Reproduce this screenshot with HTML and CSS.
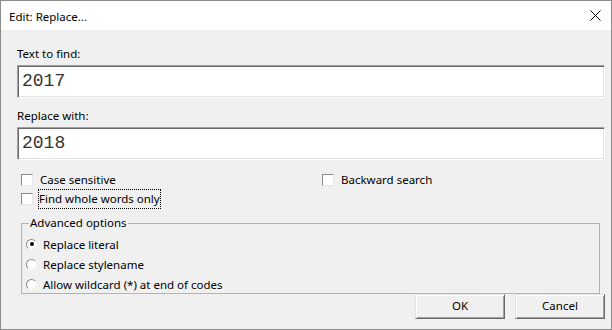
FILE: index.html
```html
<html>
<head>
<meta http-equiv="content-type" content="text/html; charset=utf-8">
<link rel="stylesheet" href="styles.css">
<title>Edit: Replace...</title>
</head>
<body>
<div class=win>
<div class=titlebar>
<span class=title>Edit: Replace...</span>
<svg class=close width=11 height=11 viewBox="0 0 11 11"><path d="M0.5 0.5L10.5 10.5M10.5 0.5L0.5 10.5" stroke="#000" stroke-width="1"/></svg>
</div>
<div class=main>
<div class=label>Text to find:</div>
<div class=edit>2017</div>
<div class=label>Replace with:</div>
<div class=edit>2018</div>
<div class=checks>
<div class=check><span class=box></span><span class=ctext>Case sensitive</span></div>
<div class=check><span class=box></span><span class=ctext>Backward search</span></div>
<div class=check><span class=box></span><span class="ctext focus">Find whole words only</span></div>
</div>
<fieldset class=group>
<legend>Advanced options</legend>
<div class=radio><span class="dot on"></span>Replace literal</div>
<div class=radio><span class=dot></span>Replace stylename</div>
<div class=radio><span class=dot></span>Allow wildcard (*) at end of codes</div>
</fieldset>
<div class=buttons>
<div class=btn>OK</div>
<div class=btn>Cancel</div>
</div>
</div>
</div>
</body>
</html>
```
FILE: styles.css
```css
html,body{margin:0;padding:0}
body{font-family:"Noto Sans","Liberation Sans",sans-serif;font-size:11.5px;color:#000;background:#f0f0f0}
.win{box-sizing:border-box;width:612px;height:330px;border:1px solid #8c8c8c;background:#f0f0f0}
.titlebar{height:29px;background:#fff;display:flex;align-items:center;justify-content:space-between;padding:0 10px 0 8px}
.title{line-height:16px;position:relative;top:1px}
.close{display:block}
.main{padding:16px 6px 0 16px}
.label{line-height:16px;height:16px;margin:0 0 3px 0}
.edit{box-sizing:border-box;height:33px;background:#fff;border:1px solid;border-color:#a0a0a0 #fff #fff #a0a0a0;
box-shadow:inset 1px 1px 0 #696969,inset -1px -1px 0 #e3e3e3;color:#333;
font-family:"Liberation Mono",monospace;font-size:18px;line-height:31px;padding-left:4px;margin-bottom:13px}
.label+.edit{margin-bottom:10px}
.checks{display:grid;grid-template-columns:301px auto;padding-left:4px}
.check{display:flex;align-items:center;height:19px}
.box{box-sizing:border-box;width:12px;height:12px;background:#fff;border:1px solid;border-color:#8a8a8a #e8e8e8 #e8e8e8 #8a8a8a;margin-right:5px;margin-top:1px}
.ctext{line-height:16px;padding:0 1px;border:1px solid transparent}
.ctext.focus{border:1px dotted #000;padding:1px 0}
.group{margin:7px 5px 0 4px;padding:0 0 1px 4px;border:1px solid #b4b4b4}
.group legend{padding:0 1px;margin-left:3px;line-height:16px}
.radio{display:flex;align-items:center;height:16px;margin-top:4px}
.radio:first-of-type{margin-top:5px}
.dot{box-sizing:border-box;width:11px;height:11px;border-radius:50%;background:#fff;border:1px solid;border-color:#8a8a8a #f4f4f4 #f4f4f4 #8a8a8a;margin-right:6px;display:flex;align-items:center;justify-content:center}
.dot.on::after{content:"";width:4px;height:4px;border-radius:50%;background:#000}
.buttons{display:flex;justify-content:flex-end;gap:10px;margin-top:0}
.btn{box-sizing:border-box;width:90px;height:25px;border:1px solid;border-color:#e3e3e3 #696969 #696969 #e3e3e3;
box-shadow:inset 1px 1px 0 #fff,inset -1px -1px 0 #a0a0a0;background:#f0f0f0;text-align:center;line-height:22px}
```
